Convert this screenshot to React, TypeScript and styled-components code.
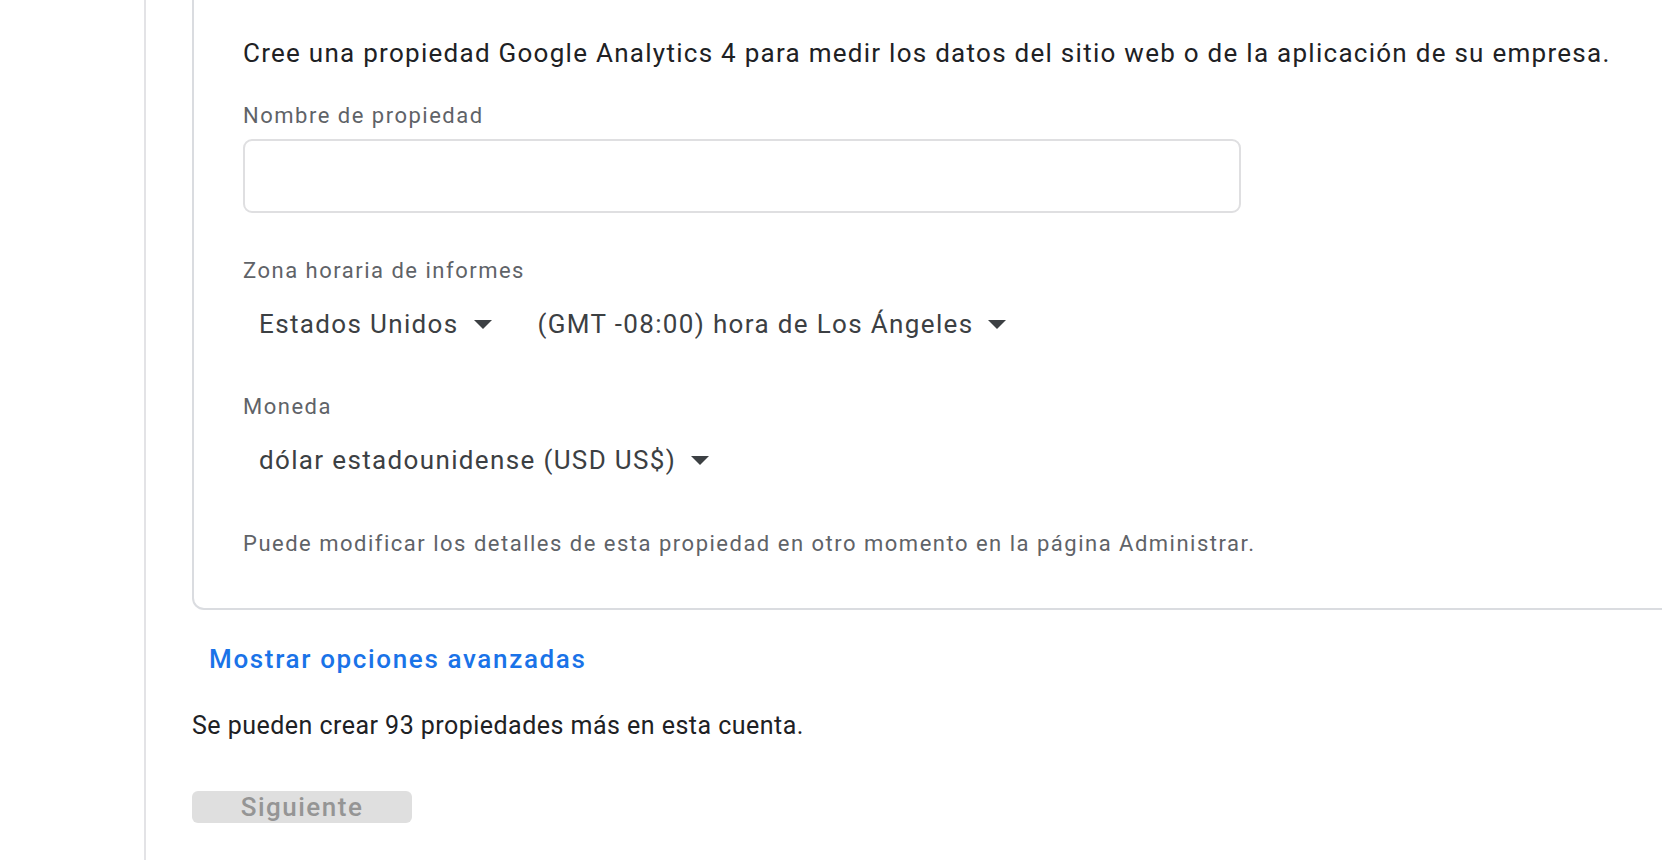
import styled, { createGlobalStyle } from 'styled-components';

const GlobalStyle = createGlobalStyle`
    html, body {
        margin: 0;
        padding: 0;
        background: #ffffff;
        font-family: Roboto, "Liberation Sans", Arial, sans-serif;
    }
`;

const Page = styled.div`
    display: flex;
    align-items: stretch;
    width: 100%;
    height: 860px;
    overflow: hidden;
`;

const Rail = styled.div`
    flex: 0 0 144px;
    border-right: 2px solid #e3e3e6;
`;

const Main = styled.div`
    flex: 1 1 auto;
    padding-left: 46px;
    min-width: 0;
`;

const Card = styled.div`
    width: 1600px;
    box-sizing: border-box;
    border: 2px solid #dadce0;
    border-top: 0;
    border-radius: 0 0 0 12px;
    padding: 37px 0 50px 49px;
`;

const Intro = styled.div`
    font-size: 26px;
    line-height: 32px;
    letter-spacing: 1.27px;
    color: #202124;
`;

const FieldLabel = styled.div<{ $top: number }>`
    margin-top: ${(p) => p.$top}px;
    font-size: 22px;
    line-height: 28px;
    letter-spacing: 1.5px;
    color: #5f6368;
`;

const TextInput = styled.div`
    margin-top: 9px;
    width: 998px;
    height: 74px;
    box-sizing: border-box;
    border: 2px solid #dfdfe1;
    border-radius: 9px;
`;

const SelectRow = styled.div`
    display: flex;
    align-items: center;
    gap: 14px;
    margin-top: 19px;
    height: 40px;
`;

const Select = styled.div`
    display: flex;
    align-items: center;
    gap: 15px;
    padding: 0 16px;
    font-size: 26px;
    letter-spacing: 1.35px;
    color: #3c4043;
`;

const Caret = styled.span`
    width: 0;
    height: 0;
    border-left: 9px solid transparent;
    border-right: 9px solid transparent;
    border-top: 9px solid #3c4043;
`;

const Hint = styled.div`
    margin-top: 50px;
    font-size: 22px;
    line-height: 28px;
    letter-spacing: 1.5px;
    color: #5f6368;
`;

const AdvancedLink = styled.a`
    display: inline-block;
    margin-top: 33px;
    padding: 0 17px;
    font-size: 26px;
    line-height: 32px;
    font-weight: 500;
    letter-spacing: 1.65px;
    color: #1a73e8;
    text-decoration: none;
    cursor: pointer;
`;

const Quota = styled.div`
    margin-top: 36px;
    font-size: 25px;
    line-height: 30px;
    letter-spacing: 0.47px;
    color: #202124;
`;

const NextButton = styled.button`
    display: block;
    margin-top: 50px;
    width: 220px;
    height: 32px;
    padding: 0;
    border: 0;
    border-radius: 6px;
    background: #dfdfdf;
    color: #959595;
    font-family: inherit;
    font-size: 26px;
    font-weight: 500;
    line-height: 32px;
    letter-spacing: 1.5px;
`;

const Dropdown = ({ label }: { label: string }) => (
    <Select>
        {label}
        <Caret />
    </Select>
);

const App = () => {
    return (
        <>
            <GlobalStyle />
            <Page>
                <Rail />
                <Main>
                    <Card>
                        <Intro>
                            Cree una propiedad Google Analytics 4 para medir los datos del sitio web o de la aplicación de su empresa.
                        </Intro>
                        <FieldLabel $top={33}>Nombre de propiedad</FieldLabel>
                        <TextInput />
                        <FieldLabel $top={44}>Zona horaria de informes</FieldLabel>
                        <SelectRow>
                            <Dropdown label="Estados Unidos" />
                            <Dropdown label="(GMT -08:00) hora de Los Ángeles" />
                        </SelectRow>
                        <FieldLabel $top={49}>Moneda</FieldLabel>
                        <SelectRow>
                            <Dropdown label="dólar estadounidense (USD US$)" />
                        </SelectRow>
                        <Hint>Puede modificar los detalles de esta propiedad en otro momento en la página Administrar.</Hint>
                    </Card>
                    <AdvancedLink>Mostrar opciones avanzadas</AdvancedLink>
                    <Quota>Se pueden crear 93 propiedades más en esta cuenta.</Quota>
                    <NextButton disabled>Siguiente</NextButton>
                </Main>
            </Page>
        </>
    );
};

export default App;
